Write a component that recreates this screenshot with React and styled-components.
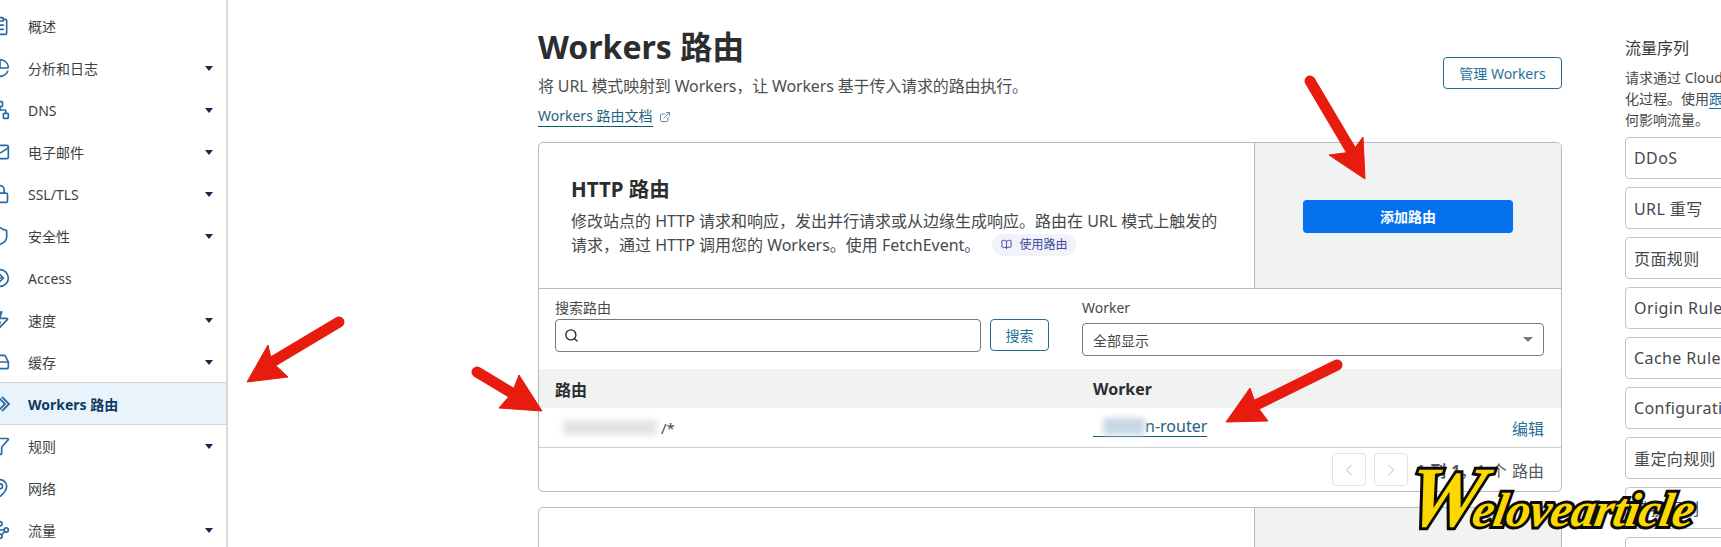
import styled, { createGlobalStyle } from "styled-components";
import {
	ClipboardList,
	ChartPie,
	Network,
	Mail,
	Lock,
	Shield,
	CircleArrowRight,
	Zap,
	HardDrive,
	Funnel,
	MapPin,
	Waypoints,
	ExternalLink,
	BookOpen,
	Search,
	ChevronLeft,
	ChevronRight,
} from "lucide-react";

const GlobalStyle = createGlobalStyle`
	html, body {
		margin: 0;
		padding: 0;
		background: #fff;
		overflow: hidden;
	}
	* {
		box-sizing: border-box;
	}
	body {
		font-family: "Noto Sans", "Noto Sans CJK SC", sans-serif;
		color: #36393a;
	}
`;

const Page = styled.div`
	position: relative;
	display: flex;
	width: 1721px;
	height: 547px;
	overflow: hidden;
`;

const Sidebar = styled.nav`
	flex: 0 0 228px;
	padding-top: 5px;
	border-right: 2px solid #d9d9d9;
`;

const NavRow = styled.div`
	display: flex;
	align-items: center;
	height: ${(p) => (p.$active ? "43px" : "42px")};
	margin-top: ${(p) => (p.$active ? "-1px" : "0")};
	padding-right: 13px;
	font-size: 14px;
	font-weight: ${(p) => (p.$active ? 700 : 400)};
	color: ${(p) => (p.$active ? "#0d3a5e" : "#3a3f42")};
	background: ${(p) => (p.$active ? "#e9f3fb" : "transparent")};
	border-top: ${(p) => (p.$active ? "1px solid #c8d4de" : "none")};
	border-bottom: ${(p) => (p.$active ? "1px solid #c8d4de" : "none")};

	svg {
		flex: 0 0 20px;
		margin-left: -10px;
		margin-right: 18px;
		color: #2b6a9e;
	}
`;

const NavLabel = styled.span`
	flex: 1;
`;

const Caret = styled.span`
	width: 0;
	height: 0;
	border-left: 4.5px solid transparent;
	border-right: 4.5px solid transparent;
	border-top: 5px solid #132c4c;
`;

const Main = styled.main`
	flex: 0 0 1024px;
	margin-left: 310px;
	padding-top: 27px;
`;

const Header = styled.header`
	display: flex;
	justify-content: space-between;
	align-items: flex-start;
`;

const Title = styled.h1`
	margin: 0;
	font-size: 32px;
	line-height: 40px;
	font-weight: 700;
	color: #2b2d2e;
`;

const Subtitle = styled.p`
	margin: 7px 0 0;
	font-size: 16px;
	line-height: 24px;
	letter-spacing: -0.15px;
	color: #4b4f52;
`;

const DocsLink = styled.div`
	display: flex;
	align-items: center;
	gap: 6px;
	margin-top: 8px;
	font-size: 14px;
	line-height: 20px;
	color: #1f5f80;

	span {
		border-bottom: 1px solid #0b5c6e;
	}
	svg {
		color: #5d8fb5;
	}
`;

const OutlineButton = styled.button`
	height: ${(p) => p.$height || "31px"};
	width: ${(p) => p.$width || "auto"};
	margin-top: ${(p) => p.$top || "0"};
	padding: 0;
	background: #fff;
	border: 1px solid #1f6f8b;
	border-radius: 4px;
	font-family: inherit;
	font-size: 14px;
	color: #2a6f9b;
`;

const Card = styled.section`
	margin-top: ${(p) => p.$top};
	border: 1px solid #b7b9ba;
	border-radius: 5px;
	overflow: hidden;
`;

const CardTop = styled.div`
	display: grid;
	grid-template-columns: 715px 1fr;
	height: 146px;
	border-bottom: 1px solid #b7b9ba;
`;

const CardIntro = styled.div`
	padding: 31px 27px 0 32px;
`;

const CardTitle = styled.h2`
	margin: 0 0 5px;
	font-size: 20.5px;
	line-height: 30px;
	font-weight: 700;
	color: #2b2d2e;
`;

const CardText = styled.p`
	margin: 0;
	font-size: 16px;
	line-height: 24px;
	color: #45494c;
`;

const Pill = styled.span`
	display: inline-flex;
	align-items: center;
	gap: 7px;
	height: 22px;
	margin-left: 12px;
	padding: 0 9px;
	vertical-align: 1px;
	background: #f1f2fa;
	border-radius: 11px;
	font-size: 12px;
	color: #3d4a9c;
`;

const CardAction = styled.div`
	display: flex;
	align-items: center;
	justify-content: center;
	background: #f1f2f2;
	border-left: 1px solid #b7b9ba;
`;

const PrimaryButton = styled.button`
	width: 210px;
	height: 33px;
	margin-top: 1px;
	background: #0570ee;
	border: none;
	border-radius: 4px;
	font-family: inherit;
	font-size: 14px;
	font-weight: 600;
	color: #fff;
`;

const Filters = styled.div`
	display: grid;
	grid-template-columns: 494px 462px;
	column-gap: 33px;
	padding: 9px 17px 13px 16px;
`;

const FieldLabel = styled.div`
	font-size: 14px;
	line-height: 20px;
	color: #45494c;
`;

const SearchRow = styled.div`
	display: flex;
	gap: 9px;
	margin-top: 1px;
`;

const SearchBox = styled.div`
	flex: 1;
	display: flex;
	align-items: center;
	height: 33px;
	padding-left: 8px;
	border: 1px solid #77797b;
	border-radius: 4px;

	svg {
		color: #2b2d2e;
	}
`;

const SelectBox = styled.div`
	display: flex;
	align-items: center;
	justify-content: space-between;
	height: 33px;
	margin-top: 5px;
	padding: 0 10px;
	border: 1px solid #77797b;
	border-radius: 4px;
	font-size: 14px;
	color: #45494c;
`;

const SelectArrow = styled.span`
	width: 0;
	height: 0;
	border-left: 5px solid transparent;
	border-right: 5px solid transparent;
	border-top: 5px solid #77797b;
`;

const TableRow = styled.div`
	display: grid;
	grid-template-columns: 538px 1fr auto;
	align-items: center;
	padding: 0 17px 0 16px;
	height: ${(p) => (p.$head ? "39px" : "40px")};
	background: ${(p) => (p.$head ? "#f1f2f2" : "#fff")};
	border-bottom: ${(p) => (p.$head ? "none" : "1px solid #cfd0d1")};
	font-size: ${(p) => (p.$head ? "16px" : "15px")};
	font-weight: ${(p) => (p.$head ? 700 : 400)};
	color: ${(p) => (p.$head ? "#2b2d2e" : "#45494c")};
`;

const RouteCell = styled.div`
	display: flex;
	align-items: center;
`;

const Smudge = styled.span`
	display: inline-block;
	width: ${(p) => p.$width};
	height: ${(p) => p.$height};
	margin-left: ${(p) => p.$left || "0"};
	margin-right: ${(p) => p.$right || "0"};
	background: ${(p) => p.$color};
	filter: blur(3px);
`;

const WorkerLink = styled.span`
	display: inline-flex;
	align-items: center;
	font-size: 16px;
	color: #1f6080;
	border-bottom: 1px solid #0b5c6e;
	line-height: 20px;
`;

const EditLink = styled.span`
	font-size: 16px;
	color: #2a6f9b;
`;

const Pagination = styled.div`
	display: flex;
	justify-content: flex-end;
	align-items: center;
	gap: 8px;
	height: 43px;
	padding-right: 17px;
	font-size: 16px;
	color: #55595c;

	b {
		font-weight: 700;
	}
`;

const PageButton = styled.span`
	display: flex;
	align-items: center;
	justify-content: center;
	width: 34px;
	height: 33px;
	border: 1px solid #e2e3e4;
	border-radius: 4px;
	color: #b5b7b9;
`;

const PageCount = styled.span`
	word-spacing: 1px;
`;

const SecondCard = styled(Card)`
	height: 120px;
`;

const SecondCardTop = styled(CardTop)`
	height: 120px;
	border-bottom: none;
`;

const Aside = styled.aside`
	flex: 0 0 auto;
	width: 200px;
	margin-left: 63px;
	padding-top: 36px;
`;

const AsideTitle = styled.div`
	font-size: 16px;
	line-height: 24px;
	color: #36393a;
`;

const AsideText = styled.div`
	margin-top: 7px;
	font-size: 14px;
	line-height: 21px;
	color: #45494c;
	white-space: nowrap;

	a {
		color: #1f6f9b;
		border-bottom: 1px solid #1f6f9b;
	}
`;

const AsideList = styled.div`
	display: flex;
	flex-direction: column;
	gap: 8px;
	margin-top: 7px;
`;

const AsideItem = styled.div`
	display: flex;
	align-items: center;
	flex: 0 0 42px;
	padding-left: 8px;
	border: 1px solid #c4c6c7;
	border-radius: 4px;
	font-size: 16px;
	letter-spacing: 0.4px;
	color: #45494c;
	white-space: nowrap;
`;

const Overlay = styled.svg`
	position: absolute;
	inset: 0;
	pointer-events: none;
`;

const Watermark = styled.div`
	position: absolute;
	left: 1398px;
	top: 452px;
	font-family: "Liberation Serif", serif;
	font-style: italic;
	font-weight: 700;
	font-size: 48px;
	line-height: 90px;
	letter-spacing: -0.5px;
	color: #fbd800;
	-webkit-text-stroke: 6px #0a0a0a;
	paint-order: stroke fill;
	transform: skewX(-10deg);
	transform-origin: left bottom;
	white-space: nowrap;
`;

const WatermarkInitial = styled.span`
	font-size: 86px;
	letter-spacing: -9px;
`;

// the chevrons sit further right than lucide's, the sidebar crops them
const WorkersIcon = () => (
	<svg width="20" height="20" viewBox="0 0 20 20" fill="none" stroke="currentColor" strokeWidth="1.8">
		<polyline points="8,3 15,10 8,17" />
		<polyline points="12,3 19,10 12,17" />
	</svg>
);

const navItems = [
	{ label: "概述", icon: ClipboardList },
	{ label: "分析和日志", icon: ChartPie, caret: true },
	{ label: "DNS", icon: Network, caret: true },
	{ label: "电子邮件", icon: Mail, caret: true },
	{ label: "SSL/TLS", icon: Lock, caret: true },
	{ label: "安全性", icon: Shield, caret: true },
	{ label: "Access", icon: CircleArrowRight },
	{ label: "速度", icon: Zap, caret: true },
	{ label: "缓存", icon: HardDrive, caret: true },
	{ label: "Workers 路由", icon: WorkersIcon, active: true },
	{ label: "规则", icon: Funnel, caret: true },
	{ label: "网络", icon: MapPin },
	{ label: "流量", icon: Waypoints, caret: true },
];

const sequence = [
	"DDoS",
	"URL 重写",
	"页面规则",
	"Origin Rules",
	"Cache Rules",
	"Configuration Rules",
	"重定向规则",
	"转换规则",
	"WAF",
];

const arrows = [
	{ shaft: "339,322 272,362", head: "247,382 268,345 272,362 288,377" },
	{ shaft: "1310,81 1352,152", head: "1365,179 1363,137 1352,152 1329,155" },
	{ shaft: "477,372 512,393", head: "542,411 519,375 512,393 499,408" },
	{ shaft: "1337,365 1256,405", head: "1226,422 1250,388 1256,405 1268,421" },
];

export default function App() {
	return (
		<Page>
			<GlobalStyle />
			<Sidebar>
				{navItems.map((item) => (
					<NavRow key={item.label} $active={item.active}>
						<item.icon size={20} strokeWidth={2} />
						<NavLabel>{item.label}</NavLabel>
						{item.caret && <Caret />}
					</NavRow>
				))}
			</Sidebar>

			<Main>
				<Header>
					<div>
						<Title>Workers 路由</Title>
						<Subtitle>
							将 URL 模式映射到 Workers，让 Workers 基于传入请求的路由执行。
						</Subtitle>
						<DocsLink>
							<span>Workers 路由文档</span>
							<ExternalLink size={12} />
						</DocsLink>
					</div>
					<OutlineButton $width="119px" $height="32px" $top="30px">
						管理 Workers
					</OutlineButton>
				</Header>

				<Card $top="15px">
					<CardTop>
						<CardIntro>
							<CardTitle>HTTP 路由</CardTitle>
							<CardText>
								修改站点的 HTTP 请求和响应，发出并行请求或从边缘生成响应。路由在 URL 模式上触发的请求，通过 HTTP 调用您的 Workers。使用 FetchEvent。
								<Pill>
									<BookOpen size={11} />
									使用路由
								</Pill>
							</CardText>
						</CardIntro>
						<CardAction>
							<PrimaryButton>添加路由</PrimaryButton>
						</CardAction>
					</CardTop>

					<Filters>
						<div>
							<FieldLabel>搜索路由</FieldLabel>
							<SearchRow>
								<SearchBox>
									<Search size={15} strokeWidth={2.2} />
								</SearchBox>
								<OutlineButton $width="59px" $height="32px">
									搜索
								</OutlineButton>
							</SearchRow>
						</div>
						<div>
							<FieldLabel>Worker</FieldLabel>
							<SelectBox>
								全部显示
								<SelectArrow />
							</SelectBox>
						</div>
					</Filters>

					<TableRow $head>
						<span>路由</span>
						<span>Worker</span>
						<span />
					</TableRow>
					<TableRow>
						<RouteCell>
							<Smudge $width="94px" $height="15px" $left="8px" $right="4px" $color="#e2e4e3" />
							<span>/*</span>
						</RouteCell>
						<div>
							<WorkerLink>
								<Smudge $width="42px" $height="17px" $left="10px" $color="#c6d7e3" />
								n-router
							</WorkerLink>
						</div>
						<EditLink>编辑</EditLink>
					</TableRow>
					<Pagination>
						<PageButton>
							<ChevronLeft size={20} strokeWidth={1.2} />
						</PageButton>
						<PageButton>
							<ChevronRight size={20} strokeWidth={1.2} />
						</PageButton>
						<PageCount>
							<b>1 到 1</b>，1 个 路由
						</PageCount>
					</Pagination>
				</Card>

				<SecondCard $top="15px">
					<SecondCardTop>
						<CardIntro />
						<CardAction />
					</SecondCardTop>
				</SecondCard>
			</Main>

			<Aside>
				<AsideTitle>流量序列</AsideTitle>
				<AsideText>
					请求通过 Cloudflare
					<br />
					化过程。使用<a>跟踪</a>
					<br />
					何影响流量。
				</AsideText>
				<AsideList>
					{sequence.map((name) => (
						<AsideItem key={name}>{name}</AsideItem>
					))}
				</AsideList>
			</Aside>

			<Overlay width="1721" height="547" viewBox="0 0 1721 547">
				{arrows.map((a) => (
					<g key={a.head} fill="#e71b0e" stroke="#e71b0e">
						<polyline points={a.shaft} fill="none" strokeWidth="11" strokeLinecap="round" />
						<polygon points={a.head} strokeWidth="1" />
					</g>
				))}
			</Overlay>
			<Watermark>
				<WatermarkInitial>W</WatermarkInitial>elovearticle
			</Watermark>
		</Page>
	);
}
